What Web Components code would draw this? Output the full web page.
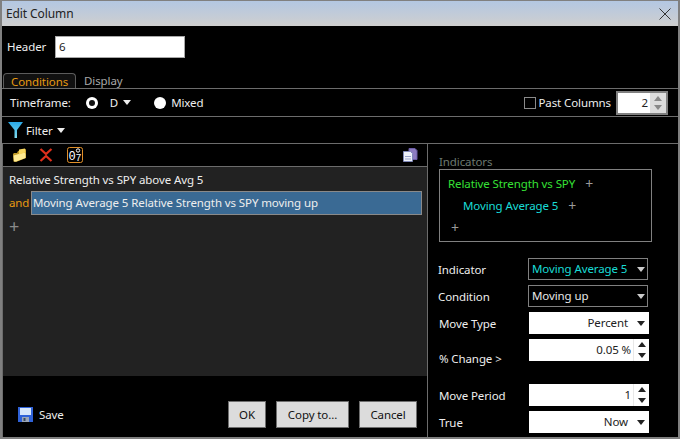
<!DOCTYPE html>
<html>
<head>
<meta charset="utf-8">
<style>
html,body{margin:0;padding:0;background:#000;}
body{font:11.5px "Noto Sans",sans-serif;letter-spacing:-.1px;color:#eee;}
</style>
</head>
<body>
<edit-column></edit-column>

<script>
// small helper, every element just sets its markup once
class Base extends HTMLElement{
  constructor(){
    super();
    this.attachShadow({mode:"open"});
  }
  connectedCallback(){
    this.shadowRoot.innerHTML = `<style>${this.getStyles()}</style>${this.getTemplate()}`;
  }
  getStyles(){ return ""; }
  getTemplate(){ return "<slot></slot>"; }
}

class TitleBar extends Base{
  getStyles(){
    return `
      :host{display:flex;align-items:center;justify-content:space-between;height:25px;padding:0 7px 0 4px;
        background:linear-gradient(#b3c7e2,#cfcfcf);color:#222;flex:none;font-size:12px;}
      svg{display:block;}
    `;
  }
  getTemplate(){
    return `<slot></slot>
      <svg width="12" height="12" viewBox="0 0 12 12"><path d="M.5 .5l11 11M11.500 .5l-11 11" stroke="#333" fill="none"/></svg>`;
  }
}

class CaretDown extends Base{
  getStyles(){
    return `:host{display:inline-block;width:0;height:0;border-left:4px solid transparent;border-right:4px solid transparent;
      border-top:5px solid var(--caret,#eee);flex:none;}`;
  }
}

class RadioDot extends Base{
  getStyles(){
    return `
      :host{display:inline-flex;align-items:center;justify-content:center;width:12px;height:12px;border-radius:50%;background:#fff;flex:none;}
      i{display:block;width:6px;height:6px;border-radius:50%;background:#111;}
    `;
  }
  getTemplate(){
    return this.hasAttribute("checked") ? "<i></i>" : "";
  }
}

class SpinBox extends Base{
  getStyles(){
    return `
      :host{display:flex;background:#fff;color:#222;height:22px;box-sizing:border-box;}
      :host([framed]){border:2px solid #808080;height:24px;}
      .v{flex:1;text-align:right;line-height:22px;padding-right:2px;white-space:nowrap;}
      :host([framed]) .v{line-height:20px;}
      .b{width:16px;display:flex;flex-direction:column;align-items:center;justify-content:center;gap:6px;border-left:1px solid #e8e8e8;box-sizing:border-box;--caret:#222;}
      :host([framed]) .b{background:#dcdcdc;border:0;--caret:#888;gap:4px;}
      .up{width:0;height:0;border-left:4px solid transparent;border-right:4px solid transparent;border-bottom:5px solid var(--caret);}
      .dn{width:0;height:0;border-left:4px solid transparent;border-right:4px solid transparent;border-top:5px solid var(--caret);}
    `;
  }
  getTemplate(){
    return `<div class="v"><slot></slot></div><div class="b"><div class="up"></div><div class="dn"></div></div>`;
  }
}

class DropBox extends Base{
  getStyles(){
    return `
      :host{display:flex;align-items:center;height:22px;box-sizing:border-box;color:#222;background:#fff;padding-right:4px;}
      :host([dark]){background:#000;border:1px solid #808080;width:120px;color:#e8e8e8;padding-left:3px;padding-right:2px;}
      :host([cyan]){color:#19dcd6;}
      .t{flex:1;text-align:right;padding-right:9px;white-space:nowrap;line-height:20px;}
      :host([dark]) .t{text-align:left;padding-right:0;}
      caret-down{--caret:#222;}
      :host([dark]) caret-down{--caret:#ccc;}
    `;
  }
  getTemplate(){
    return `<div class="t"><slot></slot></div><caret-down></caret-down>`;
  }
}

class PushButton extends Base{
  getStyles(){
    return `
      :host{display:flex;align-items:center;justify-content:center;height:27px;box-sizing:border-box;
        background:#dcdcdc;border:1px solid #6f6f6f;color:#111;}
    `;
  }
}

class TreeRow extends Base{
  getStyles(){
    return `
      :host{display:flex;align-items:center;height:22px;white-space:nowrap;}
      .p{color:#9a9a9a;font-size:14px;line-height:14px;margin:2px 0 0 10px;}
    `;
  }
  getTemplate(){
    return `<slot></slot><span class="p">+</span>`;
  }
}

class FormRow extends Base{
  getStyles(){
    return `
      :host{display:flex;align-items:flex-start;flex:none;}
      :host([dark]){margin-left:-1px;}
      .l{width:90px;flex:none;line-height:22px;color:#eee;white-space:nowrap;padding-top:1px;}
      :host([low]) .l{padding-top:9px;}
      .c{width:120px;}
    `;
  }
  getTemplate(){
    return `<div class="l">${this.getAttribute("label")}</div><div class="c"><slot></slot></div>`;
  }
}

class ToolBar extends Base{
  getStyles(){
    return `
      :host{display:flex;align-items:center;height:22px;padding:0 9px 0 9px;flex:none;border-bottom:1px solid #6c6c6c;}
      svg{display:block;flex:none;}
      .sp{flex:1;}
      text{font-family:"Liberation Mono",monospace;fill:#fff;letter-spacing:0;}
    `;
  }
  getTemplate(){
    return `
      <svg width="15" height="15" viewBox="0 0 15 15">
        <path d="M1 6l1-1h3l1-2 7-2 1 .5V10l-10 4-2.500-.5z" fill="#c09a28"/>
        <path d="M1.500 7.500L12 4.500l1.500 1V10L4 13.500H2z" fill="#ffeb94"/>
        <path d="M7 1.500l6-1 .5 4-6.500 2z" fill="#f8d860"/>
      </svg>
      <svg width="14" height="14" viewBox="0 0 14 14" style="margin-left:12px">
        <path d="M1.500 1L7 6l5.500-5M1.500 13L7 8l5.500 5" stroke="#e0301c" stroke-width="2.200" fill="none"/>
      </svg>
      <svg width="16" height="16" viewBox="0 0 16 16" style="margin-left:14px">
        <rect x=".5" y=".5" width="15" height="15" rx="2" fill="#000" stroke="#e0902a"/>
        <text x="1.500" y="13" font-size="12">0</text>
        <circle cx="11" cy="3.500" r="1.700" fill="none" stroke="#fff"/>
        <text x="8.500" y="14" font-size="10">7</text>
      </svg>
      <div class="sp"></div>
      <svg width="15" height="14" viewBox="0 0 15 14">
        <path d="M6 .5h6l2 2v9H6z" fill="#8d7cc0" stroke="#6b5ca6"/>
        <path d="M.5 3.500h7l2 2v8h-9z" fill="#eef1fa" stroke="#7f88b8"/>
        <path d="M2 8h6v1H2zM2 10.500h6v1H2z" fill="#9aa3cc"/>
      </svg>
    `;
  }
}

class EditColumn extends Base{
  getStyles(){
    return `
      :host{display:flex;flex-direction:column;width:680px;height:439px;box-sizing:border-box;background:#000;
        border:2px solid #808080;border-top-width:1px;color:#eee;overflow:hidden;}
      .head{display:flex;align-items:flex-start;height:34px;padding:10px 0 0 5px;flex:none;}
      .head span{width:48px;line-height:22px;}
      .head .in{width:130px;height:22px;box-sizing:border-box;background:#fff;border:1px solid #a8a8a8;color:#222;line-height:20px;padding-left:3px;}
      .tabs{display:flex;height:18px;align-items:flex-end;flex:none;border-bottom:1px solid #6c6c6c;padding-left:1px;}
      .tab{height:15px;line-height:15px;box-sizing:border-box;}
      .tab.on{color:#e89a12;border:1px solid #5c5c5c;border-bottom:0;border-radius:4px 4px 0 0;background:#111;width:73px;padding-left:7px;}
      .tab.off{color:#a8a8a8;margin-left:8px;}
      .time{display:flex;align-items:center;height:27px;padding-left:8px;flex:none;border-bottom:1px solid #6c6c6c;white-space:nowrap;}
      .chk{width:12px;height:12px;box-sizing:border-box;border:1px solid #8a8a8a;margin-left:auto;margin-right:2px;}
      .filter{display:flex;align-items:center;height:26px;padding-left:6px;flex:none;border-bottom:1px solid #6c6c6c;}
      .main{flex:1;display:flex;min-height:0;}
      .left{width:424px;flex:none;display:flex;flex-direction:column;border-left:1px solid #6c6c6c;border-right:1px solid #6c6c6c;}
      .list{height:209px;background:#222;flex:none;padding:2px 0 0 6px;box-sizing:border-box;}
      .cond{height:22px;line-height:22px;}
      .cond.sel{display:flex;align-items:center;height:24px;}
      .and{color:#e89a12;width:22px;flex:none;}
      .selbox{width:391px;height:24px;box-sizing:border-box;background:#3a6a94;border:1px solid #8a8a8a;line-height:22px;padding-left:1px;}
      .plus{color:#8a8a8a;font-size:18px;line-height:22px;}
      .foot{flex:1;display:flex;align-items:flex-end;padding:0 10px 9px 15px;gap:10px;}
      .save{display:flex;align-items:center;gap:6px;height:27px;margin-right:auto;}
      .right{flex:1;padding:11px 0 0 11px;min-width:0;}
      .cap{color:#6d7a70;line-height:14px;}
      .box{width:213px;height:73px;box-sizing:border-box;border:1px solid #808080;padding:2px 0 0 8px;margin-bottom:16px;}
      .sub{margin-left:15px;}
      .lone{color:#9a9a9a;font-size:14px;height:24px;line-height:24px;margin-left:3px;}
      .g{color:#36e036;} .c{color:#19dcd6;}
    `;
  }
  getTemplate(){
    return `
      <title-bar>Edit Column</title-bar>
      <div class="head"><span>Header</span><div class="in">6</div></div>
      <div class="tabs"><div class="tab on">Conditions</div><div class="tab off">Display</div></div>
      <div class="time">
        <span>Timeframe:</span>
        <radio-dot checked style="margin-left:15px"></radio-dot>
        <span style="margin-left:12px">D</span>
        <caret-down style="margin-left:5px"></caret-down>
        <radio-dot style="margin-left:23px"></radio-dot>
        <span style="margin-left:5px">Mixed</span>
        <div class="chk"></div>
        <span>Past Columns</span>
        <spin-box framed style="width:52px;margin:0 10px 0 5px">2</spin-box>
      </div>
      <div class="filter">
        <svg width="15" height="16" viewBox="0 0 15 16"><defs><linearGradient id="f" x1="0" y1="0" x2="0" y2="1"><stop offset="0" stop-color="#2aa8e6"/><stop offset="1" stop-color="#7fdcf0"/></linearGradient></defs><path d="M0 0h15L9 8V16H6.500V8z" fill="url(#f)"/></svg>
        <span style="margin-left:3px">Filter</span>
        <caret-down style="margin-left:4px"></caret-down>
      </div>
      <div class="main">
        <div class="left">
          <tool-bar></tool-bar>
          <div class="list">
            <div class="cond">Relative Strength vs SPY above Avg 5</div>
            <div class="cond sel"><span class="and">and</span><div class="selbox">Moving Average 5 Relative Strength vs SPY moving up</div></div>
            <div class="plus">+</div>
          </div>
          <div class="foot">
            <div class="save">
              <svg width="15" height="15" viewBox="0 0 15 15">
                <path d="M0 0h15v15H0z" fill="#2f62d8"/>
                <path d="M2 1h11v7H2z" fill="#d6e6fb"/>
                <path d="M4 10h7v5H4z" fill="#9aa6b8"/><path d="M5.500 11h2v3h-2z" fill="#3a4a60"/>
              </svg>
              <span>Save</span>
            </div>
            <push-button style="width:38px">OK</push-button>
            <push-button style="width:73px">Copy to...</push-button>
            <push-button style="width:58px">Cancel</push-button>
          </div>
        </div>
        <div class="right">
          <div class="cap">Indicators</div>
          <div class="box">
            <tree-row class="g">Relative Strength vs SPY</tree-row>
            <tree-row class="c sub">Moving Average 5</tree-row>
            <div class="lone">+</div>
          </div>
          <form-row label="Indicator" dark style="height:27px"><drop-box dark cyan>Moving Average 5</drop-box></form-row>
          <form-row label="Condition" dark style="height:27px"><drop-box dark>Moving up</drop-box></form-row>
          <form-row label="Move Type" style="height:27px"><drop-box>Percent</drop-box></form-row>
          <form-row label="% Change &gt;" low style="height:45px"><spin-box>0.05 %</spin-box></form-row>
          <form-row label="Move Period" style="height:27px"><spin-box>1</spin-box></form-row>
          <form-row label="True" style="height:24px"><drop-box>Now</drop-box></form-row>
        </div>
      </div>
    `;
  }
}

customElements.define("title-bar", TitleBar);
customElements.define("caret-down", CaretDown);
customElements.define("radio-dot", RadioDot);
customElements.define("spin-box", SpinBox);
customElements.define("drop-box", DropBox);
customElements.define("push-button", PushButton);
customElements.define("tree-row", TreeRow);
customElements.define("form-row", FormRow);
customElements.define("tool-bar", ToolBar);
customElements.define("edit-column", EditColumn);
</script>
</body>
</html>
